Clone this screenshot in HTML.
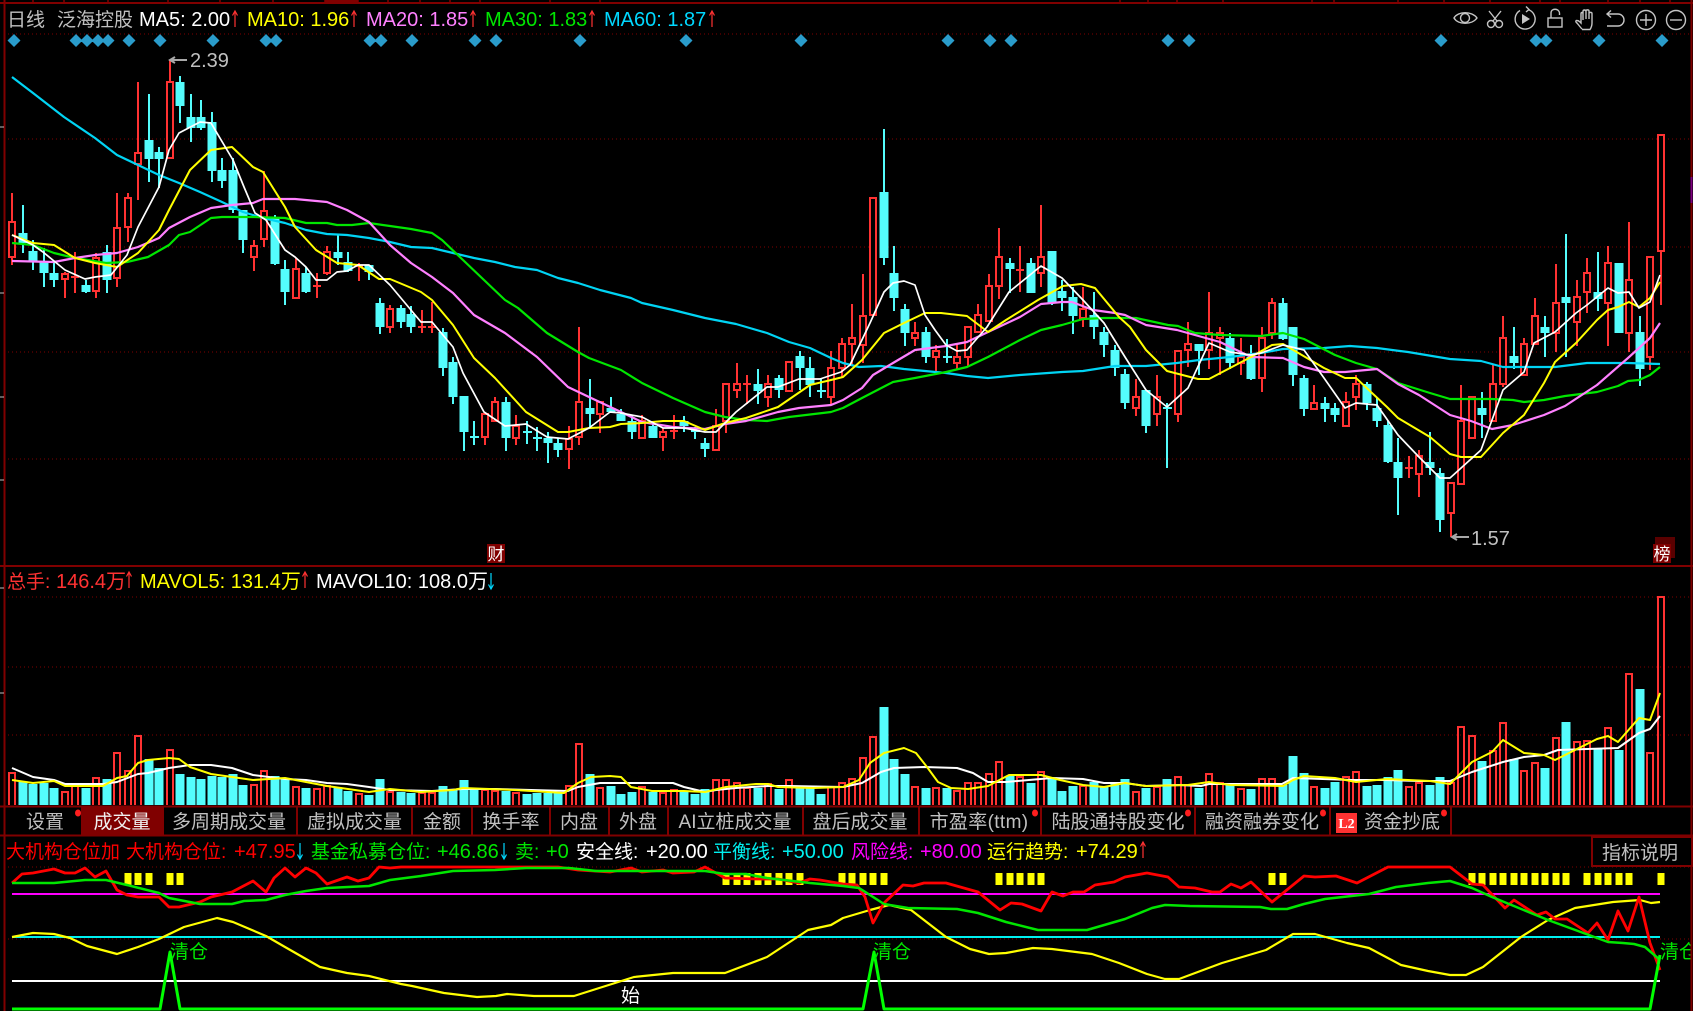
<!DOCTYPE html>
<html lang="zh"><head><meta charset="utf-8"><title>泛海控股 日线</title>
<style>
html,body{margin:0;padding:0;background:#000;width:1693px;height:1011px;overflow:hidden}
svg{display:block;position:absolute;left:0;top:0}
text{font-family:"Liberation Sans","Noto Sans CJK SC",sans-serif;white-space:pre}
.c{font-size:19px}.n{font-size:20px}.v{font-size:20px}
.tab{font-size:19px;fill:#c0c0c0;text-anchor:middle}
</style></head><body>
<svg width="1693" height="1011" viewBox="0 0 1693 1011" xmlns="http://www.w3.org/2000/svg">
<rect width="1693" height="1011" fill="#000"/>
<!-- dotted grid -->
<path d="M8 34H1690M8 139H1690M8 247H1690M8 352H1690M8 459H1690M8 597H1690M8 667H1690M8 735H1690M8 867H1690M8 939H1690" stroke="#800000" stroke-width="1" stroke-dasharray="1 3" fill="none"/>
<!-- frame -->
<path d="M0 3H1693M0 566H1693M0 806.5H1693M0 835.5H1693" stroke="#800000" stroke-width="2" fill="none"/>
<path d="M4.5 0V1011M1691.5 0V1011" stroke="#800000" stroke-width="2" fill="none"/>
<path d="M1691.5 177V203" stroke="#800080" stroke-width="2"/>
<path d="M33 0V2M64 0V2M108 0V2M168 0V2M220 0V2M273 0V2M325 0V2M358 0V2M388 0V2M420 0V2M450 0V2M480 0V2M550 0V2M600 0V2M1120 0V2M1148 0V2M1177 0V2M1223 0V2M1312 0V2M1334 0V2M1398 0V2M1444 0V2M1490 0V2M1540 0V2M1560 0V2M1608 0V2M1640 0V2M1670 0V2" stroke="#800000" stroke-width="1.5"/>
<path d="M325 0H358" stroke="#800000" stroke-width="4"/>
<path d="M0 127H4M0 293H4M0 397H4M0 480H4M0 588H4M0 693H4" stroke="#c0c0c0" stroke-width="1"/>

<!-- diamonds -->
<g fill="#2a9ccb">
<path d="M14 34l6.5 6.5-6.500 6.500-6.500-6.500zM76 34l6.500 6.500-6.500 6.500-6.500-6.500zM87 34l6.500 6.500-6.500 6.500-6.500-6.500zM98 34l6.500 6.500-6.500 6.500-6.500-6.500zM108 34l6.500 6.500-6.500 6.500-6.500-6.500zM129 34l6.500 6.500-6.500 6.500-6.500-6.500zM160 34l6.500 6.500-6.500 6.500-6.500-6.500zM213 34l6.500 6.500-6.500 6.500-6.500-6.500zM266 34l6.500 6.500-6.500 6.500-6.500-6.500zM276 34l6.500 6.500-6.500 6.500-6.500-6.500zM370 34l6.500 6.500-6.500 6.500-6.500-6.500zM381 34l6.500 6.500-6.500 6.500-6.500-6.500zM412 34l6.500 6.500-6.500 6.500-6.500-6.500zM475 34l6.500 6.500-6.500 6.500-6.500-6.500zM496 34l6.500 6.500-6.500 6.500-6.500-6.500zM580 34l6.500 6.500-6.500 6.500-6.500-6.500zM686 34l6.500 6.500-6.500 6.500-6.500-6.500zM801 34l6.500 6.500-6.500 6.500-6.500-6.500zM948 34l6.500 6.500-6.500 6.500-6.500-6.500zM990 34l6.500 6.500-6.500 6.500-6.500-6.500zM1011 34l6.500 6.500-6.500 6.500-6.500-6.500zM1168 34l6.500 6.500-6.500 6.500-6.500-6.500zM1189 34l6.500 6.500-6.500 6.500-6.500-6.500zM1441 34l6.500 6.500-6.500 6.500-6.500-6.500zM1536 34l6.500 6.500-6.500 6.500-6.500-6.500zM1546 34l6.500 6.500-6.500 6.500-6.500-6.500zM1599 34l6.500 6.500-6.500 6.500-6.500-6.500zM1662 34l6.500 6.500-6.500 6.500-6.500-6.500z"/>
</g>

<!-- red candles -->
<g shape-rendering="crispEdges">
<path stroke="#ff3232" stroke-width="2" fill="none" d="M12 193V265M65 272V298M75 252V293M96 253V298M117 193V287M128 193V242M138 82V200M170 60V159M254 240V271M264 171V247M296 258V298M317 273V298M327 246V275M359 263V281M390 305V333M422 310V333M432 302V333M485 414V445M495 397V421M516 415V445M569 426V469M579 327V445M600 402V433M642 415V438M663 428V451M674 415V439M716 409V451M726 384V433M737 363V398M747 375V404M768 375V407M789 362V391M831 351V405M842 338V378M852 304V365M863 274V363M873 198V315M915 322V346M936 345V375M957 345V369M968 327V367M978 304V333M989 274V322M999 228V299M1020 246V292M1041 205V287M1083 287V327M1136 379V416M1157 375V426M1178 351V422M1188 322V367M1209 292V369M1220 327V375M1241 338V375M1262 327V392M1272 298V339M1314 385V410M1346 392V427M1356 375V410M1409 456V478M1419 450V497M1451 483V537M1461 385V484M1472 397V438M1493 365V421M1503 316V387M1524 338V375M1535 298V344M1556 264V352M1577 280V346M1587 258V313M1608 246V346M1629 222V352M1650 257V370M1661 135V305M71 277H79M313 286H321M355 266H363M418 327H426M428 327H436M670 431H678M743 384H751M1016 270H1024M1405 468H1413"/>
<path stroke="#ff3232" stroke-width="2" fill="#000" d="M9 222H15V257H9ZM62 274H68V279H62ZM93 258H99V291H93ZM114 228H120V278H114ZM125 198H131V227H125ZM135 153H141V164H135ZM167 82H173V158H167ZM251 246H257V257H251ZM261 211H267V239H261ZM293 269H299V298H293ZM324 252H330V273H324ZM387 309H393V327H387ZM482 414H488V437H482ZM492 402H498V421H492ZM513 426H519V438H513ZM566 439H572V449H566ZM576 402H582V437H576ZM597 402H603V414H597ZM639 421H645V438H639ZM660 432H666V437H660ZM713 426H719V450H713ZM723 384H729V421H723ZM734 384H740V390H734ZM765 384H771V397H765ZM786 362H792V391H786ZM828 368H834V397H828ZM839 344H845V368H839ZM849 338H855V344H849ZM860 316H866V345H860ZM870 198H876V315H870ZM912 333H918V338H912ZM933 351H939V357H933ZM954 357H960V363H954ZM965 327H971V357H965ZM975 315H981V332H975ZM986 286H992V321H986ZM996 257H1002V286H996ZM1038 257H1044V273H1038ZM1080 309H1086V318H1080ZM1133 397H1139V408H1133ZM1154 397H1160V414H1154ZM1175 351H1181V414H1175ZM1185 344H1191V350H1185ZM1206 333H1212V350H1206ZM1217 333H1223V338H1217ZM1238 357H1244V363H1238ZM1259 338H1265V378H1259ZM1269 303H1275V333H1269ZM1311 403H1317V409H1311ZM1343 402H1349V426H1343ZM1353 384H1359V397H1353ZM1416 456H1422V474H1416ZM1448 483H1454V513H1448ZM1458 421H1464V484H1458ZM1469 397H1475V438H1469ZM1490 384H1496V421H1490ZM1500 338H1506V384H1500ZM1521 344H1527V375H1521ZM1532 316H1538V344H1532ZM1553 303H1559V333H1553ZM1574 297H1580V322H1574ZM1584 273H1590V292H1584ZM1605 263H1611V303H1605ZM1626 280H1632V333H1626ZM1647 257H1653V357H1647ZM1658 135H1664V251H1658Z"/>
<!-- cyan candles -->
<path stroke="#54fcfc" stroke-width="2" fill="none" d="M23 205V253M33 240V270M44 248V287M54 263V287M86 280V293M107 245V293M149 94V182M159 147V188M180 76V123M191 94V142M201 100V130M212 112V182M222 158V188M233 158V213M243 210V253M275 215V265M285 260V305M306 267V293M338 234V265M348 252V272M369 265V280M380 298V334M401 305V328M411 306V333M443 328V376M453 357V404M464 396V451M474 421V445M506 397V451M527 421V444M537 427V451M548 432V463M558 438V457M590 379V427M611 397V413M621 409V421M632 415V439M653 422V438M684 416V432M695 427V439M705 438V457M758 369V404M779 375V398M800 351V390M810 357V397M821 378V398M884 129V265M894 246V311M905 304V346M926 327V363M947 339V363M1010 258V293M1031 258V293M1052 251V305M1062 280V311M1073 287V334M1094 292V339M1104 327V357M1115 345V376M1125 369V409M1146 390V433M1167 403V468M1199 344V375M1230 333V369M1251 345V380M1283 298V340M1293 327V386M1304 375V416M1325 397V422M1335 403V422M1367 382V410M1377 397V427M1388 421V463M1398 438V515M1430 432V475M1440 468V532M1482 392V438M1514 327V369M1545 316V357M1566 234V357M1598 252V311M1619 263V333M1640 316V386M470 437H479M523 432H532M533 438H542M691 431H700M817 391H826M943 357H952M1163 408H1172"/>
<path stroke="#54fcfc" stroke-width="9" fill="none" d="M23 233V243M33 251V262M44 262V273M54 273V280M86 285V292M107 252V280M149 140V159M159 152V159M180 82V106M191 117V128M201 117V128M212 122V171M222 170V181M233 170V210M243 210V240M275 217V264M285 269V292M306 273V292M338 252V258M348 262V271M369 265V272M380 303V327M401 308V322M411 314V327M443 332V368M453 362V397M464 396V432M506 402V438M548 438V443M558 443V450M590 408V414M611 408V412M621 414V421M632 421V432M653 426V438M684 421V426M705 443V449M758 384V391M779 378V390M800 356V368M810 368V385M884 192V258M894 273V298M905 309V333M926 332V357M1010 263V269M1031 263V293M1052 251V303M1062 291V298M1073 297V316M1094 315V327M1104 332V345M1115 350V368M1125 374V403M1146 390V426M1199 344V351M1230 338V363M1251 357V379M1283 303V339M1293 327V375M1304 378V409M1325 403V409M1335 408V415M1367 384V403M1377 408V421M1388 425V462M1398 462V478M1430 462V468M1440 473V520M1482 408V415M1514 356V363M1545 327V333M1566 297V303M1598 292V299M1619 263V333M1640 332V369"/>
</g>

<!-- MA lines -->
<g fill="none" stroke-linejoin="round">
<polyline stroke="#00d4f4" stroke-width="2.2" points="12,77 33,93 64,117 95,138 117,155 138,165 159,175 179,183 200,192 222,202 243,212 263,218 285,223 306,230 327,234 347,235 369,238 390,242 411,247 432,248 453,253 474,258 495,262 515,267 537,270 558,278 578,283 600,290 631,298 642,303 673,310 705,318 736,324 767,333 789,342 810,348 831,358 843,363 859,367 881,366 904,369 946,373 967,376 988,378 1020,375 1062,372 1083,371 1115,366 1146,366 1177,363 1199,360 1230,357 1261,353 1283,349 1324,348 1350,346 1377,348 1408,352 1450,359 1481,361 1503,367 1555,367 1587,363 1628,363 1660,364"/>
<polyline stroke="#00e600" stroke-width="2.2" points="12,243 33,245 54,253 75,258 106,263 127,262 148,257 169,245 179,235 190,232 211,218 222,217 253,217 285,218 306,223 327,223 337,225 352,225 369,223 390,226 411,229 432,233 442,240 463,260 484,280 505,300 518,308 547,333 578,352 589,358 621,370 642,383 673,398 705,412 725,417 746,420 767,421 789,417 831,412 843,408 862,398 893,382 915,378 946,372 967,367 988,357 1020,340 1041,330 1062,325 1083,319 1104,318 1136,318 1168,325 1178,326 1195,333 1220,335 1261,336 1283,333 1304,339 1335,355 1356,363 1377,369 1398,383 1430,393 1450,399 1492,399 1513,400 1524,402 1544,400 1565,396 1597,392 1618,386 1628,381 1639,380 1650,375 1660,367"/>
<polyline stroke="#ff80ff" stroke-width="2.2" points="12,261 54,262 75,258 95,255 117,253 138,247 159,238 169,228 190,217 211,208 232,205 253,203 263,199 295,199 327,202 347,210 369,222 390,245 411,263 432,277 453,293 474,315 505,333 537,357 568,387 589,397 621,412 642,422 673,427 705,429 725,424 746,421 778,412 799,408 831,405 843,400 862,388 873,375 893,363 915,350 946,346 967,342 988,332 1020,317 1041,304 1062,302 1072,302 1093,310 1115,313 1125,315 1146,325 1177,330 1220,342 1251,357 1283,358 1304,367 1324,372 1345,372 1377,369 1398,384 1419,395 1450,415 1471,421 1492,429 1513,425 1544,415 1565,406 1597,385 1628,358 1650,338 1660,323"/>
<polyline stroke="#ffff00" stroke-width="2" points="12,235 33,243 54,245 75,258 95,263 117,267 138,253 159,230 169,210 190,170 211,150 232,147 253,167 263,172 285,207 295,227 316,250 337,263 358,265 379,279 390,279 421,292 432,300 453,325 474,358 495,378 526,412 558,432 568,432 589,428 610,427 621,424 642,423 663,421 684,421 705,430 725,423 746,418 778,407 810,385 831,380 843,377 862,360 884,333 904,323 925,313 941,313 967,316 988,332 1006,320 1038,300 1063,286 1081,284 1095,288 1119,317 1130,327 1146,350 1167,371 1198,379 1209,379 1251,357 1272,345 1283,344 1324,368 1345,378 1356,378 1387,407 1398,418 1430,437 1450,454 1461,457 1481,457 1503,433 1524,415 1544,383 1555,362 1576,343 1597,320 1608,310 1618,307 1629,302 1639,307 1650,298 1660,282"/>
<polyline stroke="#fff" stroke-width="1.7" points="12,235 33,245 43,252 65,270 85,279 95,277 111,275 127,255 138,227 159,187 169,150 179,133 200,122 211,123 233,160 244,187 255,213 266,220 285,250 295,257 306,267 316,280 327,280 337,272 347,271 358,265 369,265 390,285 421,322 432,322 453,347 463,373 484,412 505,426 526,424 547,437 568,439 589,428 610,412 621,413 642,417 663,428 684,428 705,432 716,432 736,412 767,387 778,387 799,379 820,379 841,372 850,365 870,323 884,292 893,283 904,281 915,285 925,315 935,330 946,345 957,351 967,350 987,327 1009,292 1041,266 1062,278 1083,300 1104,323 1125,357 1146,390 1167,407 1188,388 1209,343 1230,352 1251,355 1261,353 1283,345 1304,350 1324,378 1345,408 1356,403 1377,405 1398,435 1419,457 1440,478 1450,478 1481,450 1492,420 1503,390 1524,372 1534,343 1555,332 1576,313 1587,305 1608,288 1618,293 1629,292 1639,308 1650,302 1660,275"/>
</g>

<!-- price labels -->
<path d="M187 60H171M175 57L170 60L175 63M1469 537H1453M1457 534L1452 537L1457 540" stroke="#a8a8a8" stroke-width="2" fill="none"/>
<text x="190" y="67" class="n" fill="#c0c0c0">2.39</text>
<text x="1471" y="545" class="n" fill="#c0c0c0">1.57</text>

<!-- 财 / 榜 -->
<rect x="487" y="544" width="18" height="19" fill="#800000"/>
<text x="496" y="560" font-size="17" fill="#fff" text-anchor="middle">财</text>
<rect x="1655" y="537" width="20" height="21" fill="#5a0000"/>
<rect x="1653" y="544" width="18" height="19" fill="#800000"/>
<text x="1662" y="560" font-size="17" fill="#fff" text-anchor="middle">榜</text>

<!-- volume bars -->
<g shape-rendering="crispEdges" fill="none">
<path stroke="#54fcfc" stroke-width="9" d="M23 805V782M33 805V784M44 805V783M54 805V788M86 805V788M107 805V779M149 805V759M159 805V768M180 805V774M191 805V777M201 805V779M212 805V776M222 805V777M233 805V774M243 805V785M275 805V776M285 805V779M306 805V788M338 805V788M348 805V791M369 805V795M380 805V779M401 805V792M411 805V793M443 805V786M453 805V789M464 805V780M474 805V790M506 805V791M527 805V794M537 805V793M548 805V793M558 805V793M590 805V774M611 805V786M621 805V794M632 805V792M653 805V792M684 805V792M695 805V794M705 805V789M758 805V788M779 805V789M800 805V786M810 805V788M821 805V794M884 805V707M894 805V759M905 805V774M926 805V788M947 805V788M1010 805V776M1031 805V783M1052 805V778M1062 805V791M1073 805V786M1094 805V782M1104 805V786M1115 805V783M1125 805V779M1146 805V788M1167 805V779M1199 805V788M1230 805V785M1251 805V789M1283 805V785M1293 805V756M1304 805V773M1325 805V788M1335 805V782M1367 805V786M1377 805V785M1388 805V777M1398 805V770M1430 805V785M1440 805V777M1482 805V761M1514 805V759M1545 805V768M1566 805V722M1598 805V748M1619 805V750M1640 805V689"/>
<path stroke="#ff3232" stroke-width="2" d="M9 805V773H15V805M62 805V792H68V805M72 805V785H78V805M93 805V778H99V805M114 805V753H120V805M125 805V771H131V805M135 805V736H141V805M167 805V750H173V805M251 805V785H257V805M261 805V771H267V805M293 805V787H299V805M314 805V789H320V805M324 805V786H330V805M356 805V794H362V805M387 805V792H393V805M419 805V793H425V805M429 805V793H435V805M482 805V790H488V805M492 805V791H498V805M513 805V793H519V805M566 805V786H572V805M576 805V744H582V805M597 805V788H603V805M639 805V787H645V805M660 805V793H666V805M671 805V790H677V805M713 805V780H719V805M723 805V780H729V805M734 805V783H740V805M744 805V788H750V805M765 805V784H771V805M786 805V780H792V805M828 805V787H834V805M839 805V783H845V805M849 805V779H855V805M860 805V758H866V805M870 805V737H876V805M912 805V787H918V805M933 805V788H939V805M954 805V791H960V805M965 805V783H971V805M975 805V783H981V805M986 805V774H992V805M996 805V762H1002V805M1017 805V777H1023V805M1038 805V772H1044V805M1080 805V786H1086V805M1133 805V792H1139V805M1154 805V787H1160V805M1175 805V777H1181V805M1185 805V785H1191V805M1206 805V774H1212V805M1217 805V783H1223V805M1238 805V789H1244V805M1259 805V779H1265V805M1269 805V779H1275V805M1311 805V787H1317V805M1343 805V777H1349V805M1353 805V772H1359V805M1406 805V787H1412V805M1416 805V783H1422V805M1448 805V783H1454V805M1458 805V727H1464V805M1469 805V736H1475V805M1490 805V751H1496V805M1500 805V723H1506V805M1521 805V771H1527V805M1532 805V763H1538V805M1553 805V738H1559V805M1574 805V742H1580V805M1584 805V741H1590V805M1605 805V728H1611V805M1626 805V674H1632V805M1647 805V753H1653V805M1658 805V597H1664V805"/>
</g>
<g fill="none" stroke-linejoin="round">
<polyline stroke="#fff" stroke-width="2" points="12,768 33,777 54,780 65,784 103,784 117,782 138,774 148,773 169,768 190,765 211,765 232,768 253,775 285,779 306,780 327,783 347,784 369,787 390,790 432,791 463,789 495,789 568,791 578,787 600,783 673,783 684,787 705,792 716,790 736,788 768,786 789,786 843,787 862,783 881,772 894,768 924,767 957,768 973,773 988,782 1006,782 1052,778 1083,779 1104,783 1125,783 1146,786 1179,785 1201,786 1209,784 1282,784 1293,778 1352,780 1385,780 1419,781 1450,781 1472,772 1503,762 1524,757 1544,755 1558,750 1587,749 1618,748 1639,733 1650,729 1660,716"/>
<polyline stroke="#ffff00" stroke-width="2" points="12,780 33,783 54,781 65,786 103,786 117,778 127,776 138,763 148,760 169,758 179,759 190,767 211,774 232,777 253,780 285,778 327,786 369,792 390,789 421,792 453,790 463,788 515,790 564,793 578,783 591,777 610,776 621,777 631,787 652,791 684,791 705,792 726,787 756,784 768,784 778,787 813,788 843,787 859,780 870,763 884,753 904,748 916,753 927,767 938,782 951,788 968,789 988,786 1009,775 1041,775 1060,780 1083,785 1104,787 1125,783 1146,786 1188,785 1209,782 1230,785 1283,786 1293,780 1304,776 1335,778 1356,782 1387,779 1430,781 1450,784 1472,762 1492,752 1503,740 1524,753 1544,755 1555,760 1575,750 1597,739 1608,736 1618,742 1639,718 1650,720 1660,693"/>
</g>

<!-- tabs -->
<rect x="82" y="807.500" width="81" height="27" fill="#800000"/>
<path d="M163 807V835M297 807V835M412 807V835M472 807V835M550 807V835M609 807V835M668 807V835M803 807V835M919 807V835M1041 807V835M1195 807V835M1330 807V835M1451 807V835M82 807V835" stroke="#800000" stroke-width="2"/>
<g fill="#ff1e1e"><ellipse cx="78" cy="813" rx="3" ry="3.500"/><ellipse cx="1035" cy="813" rx="3" ry="3.500"/><ellipse cx="1188" cy="813" rx="3" ry="3.500"/><ellipse cx="1323" cy="813" rx="3" ry="3.500"/><ellipse cx="1444" cy="813" rx="3" ry="3.500"/></g>
<text class="tab" x="45" y="828">设置</text>
<text class="tab" x="122" y="828" style="fill:#f0f0f0">成交量</text>
<text class="tab" x="229" y="828">多周期成交量</text>
<text class="tab" x="354.500" y="828">虚拟成交量</text>
<text class="tab" x="442" y="828">金额</text>
<text class="tab" x="511" y="828">换手率</text>
<text class="tab" x="579" y="828">内盘</text>
<text class="tab" x="638" y="828">外盘</text>
<text class="tab" x="735" y="828">AI立桩成交量</text>
<text class="tab" x="860" y="828">盘后成交量</text>
<text class="tab" x="979" y="828" style="letter-spacing:.35px">市盈率(ttm)</text>
<text class="tab" x="1118" y="828">陆股通持股变化</text>
<text class="tab" x="1262" y="828">融资融券变化</text>
<rect x="1336" y="813" width="21" height="20" fill="#ff3232"/>
<text x="1346.500" y="828" fill="#fff" font-size="14" font-weight="bold" text-anchor="middle" style="font-family:'Liberation Serif',serif">L2</text>
<text class="tab" x="1402" y="828">资金抄底</text>

<!-- indicator panel -->
<path fill="none" stroke="#ffff00" stroke-width="7" shape-rendering="crispEdges" d="M128 873V885M138 873V885M149 873V885M170 873V885M180 873V885M726 873V885M737 873V885M747 873V885M758 873V885M768 873V885M779 873V885M789 873V885M800 873V885M842 873V885M852 873V885M863 873V885M873 873V885M884 873V885M999 873V885M1010 873V885M1020 873V885M1031 873V885M1041 873V885M1272 873V885M1283 873V885M1472 873V885M1482 873V885M1493 873V885M1503 873V885M1514 873V885M1524 873V885M1535 873V885M1545 873V885M1556 873V885M1566 873V885M1587 873V885M1598 873V885M1608 873V885M1619 873V885M1629 873V885M1661 873V885"/>
<path d="M12 894H1660" stroke="#ff00ff" stroke-width="2"/>
<path d="M12 937H1660" stroke="#00f0f0" stroke-width="2"/>
<path d="M12 981H1660" stroke="#fff" stroke-width="2"/>
<g fill="none" stroke-linejoin="round">
<polyline stroke="#ffff00" stroke-width="2.200" points="12,937 33,933 54,934 70,938 87,946 117,954 138,947 159,939 184,927 217,918 233,922 266,936 285,947 320,967 347,973 369,976 401,984 412,986 444,993 477,997 496,996 507,994 534,996 574,996 634,977 673,973 725,973 767,957 808,930 831,925 843,918 870,910 889,905 911,910 946,937 970,949 989,954 1006,953 1033,948 1052,949 1092,954 1119,963 1147,974 1165,979 1179,979 1222,963 1266,950 1293,934 1315,934 1347,943 1369,948 1401,965 1428,971 1450,975 1466,975 1483,967 1521,937 1548,920 1575,908 1613,902 1640,900 1651,903 1660,902"/>
<polyline stroke="#ff0000" stroke-width="2.800" points="12,883 22,874 33,873 54,869 65,873 75,873 85,868 95,877 106,871 117,890 127,895 138,897 159,897 169,907 179,907 200,902 211,897 232,892 253,881 266,892 274,878 285,868 295,877 306,868 316,873 327,884 347,877 358,881 369,878 379,867 390,868 401,867 558,867 578,870 610,872 631,868 642,872 663,870 673,873 694,872 705,867 716,873 725,878 757,879 778,879 799,883 810,879 820,880 843,884 857,885 865,897 873,923 884,903 903,885 913,886 924,883 946,883 978,892 1000,910 1011,903 1022,904 1041,911 1052,892 1063,896 1073,892 1084,892 1095,885 1114,882 1125,877 1147,873 1168,877 1179,887 1195,888 1212,892 1220,892 1231,884 1241,888 1251,882 1272,902 1304,876 1315,877 1336,876 1357,883 1388,867 1450,867 1472,884 1483,885 1505,908 1514,900 1537,915 1546,912 1555,919 1567,919 1588,933 1597,923 1608,940 1618,911 1628,931 1639,897 1650,943 1660,970"/>
<polyline stroke="#00e600" stroke-width="2.500" points="12,883 54,883 85,880 106,880 127,885 159,893 169,898 200,904 232,904 244,901 266,900 285,895 306,891 327,888 369,886 390,880 421,876 453,871 495,870 526,868 569,868 596,871 705,871 725,874 746,874 767,878 810,883 843,886 859,888 884,904 908,908 957,909 978,913 1006,922 1038,930 1087,930 1125,919 1152,908 1165,905 1190,906 1260,907 1271,909 1287,909 1304,904 1325,899 1369,894 1396,887 1428,883 1450,881 1472,888 1492,897 1548,920 1608,942 1623,943 1634,944 1645,947 1660,960"/>
<polyline stroke="#00ff00" stroke-width="3" points="12,1009 160,1009 170,952 180,1009 863,1009 874,952 884,1009 1650,1009 1660,955"/>
</g>
<text x="170" y="958" class="c" fill="#00e600">清仓</text>
<text x="873" y="958" class="c" fill="#00e600">清仓</text>
<text x="1660" y="958" class="c" fill="#00e600">清仓</text>
<text x="621" y="1002" class="c" fill="#fff">始</text>
<rect x="1691" y="940" width="2" height="24" fill="#000"/>
<path d="M1691.500 940V964" stroke="#800000" stroke-width="2"/>

<!-- header -->
<text x="7" y="26" class="c" fill="#c0c0c0">日线</text>
<text x="57" y="26" class="c" fill="#c0c0c0">泛海控股</text>
<text x="139" y="26" class="n" fill="#fff">MA5: 2.00</text>
<text x="247" y="26" class="n" fill="#ffff00">MA10: 1.96</text>
<text x="366" y="26" class="n" fill="#ff80ff">MA20: 1.85</text>
<text x="485" y="26" class="n" fill="#00e600">MA30: 1.83</text>
<text x="604" y="26" class="n" fill="#00d8ff">MA60: 1.87</text>
<path d="M235 27V12M232.500 15.500L235 11L237.500 15.500M354 27V12M351.500 15.500L354 11L356.500 15.500M473 27V12M470.500 15.500L473 11L475.500 15.500M592 27V12M589.500 15.500L592 11L594.500 15.500M712 27V12M709.500 15.500L712 11L714.500 15.500" stroke="#ff3232" stroke-width="1.200" fill="none"/>

<!-- toolbar icons -->
<g fill="none" stroke="#c4c4c4" stroke-width="1.400">
<path d="M1454 18C1458 11 1472 11 1477 18C1472 25 1458 25 1454 18Z"/><circle cx="1465" cy="18" r="4.500"/>
<path d="M1489 11L1497 21M1501 11L1493 21"/><circle cx="1491" cy="24" r="3.500"/><circle cx="1499" cy="24" r="3.500"/>
<path d="M1528 9.500A10 10 0 1 1 1520 10.500"/><path d="M1526 6.500L1529 9.500L1526 12"/><path d="M1522 14L1530 19L1522 24Z" fill="#c4c4c4" stroke="none"/>
<rect x="1548" y="18" width="14" height="9"/><path d="M1551 18V13C1551 8 1559 8 1559.500 13V15"/>
<path d="M1582 29C1580 27 1578 24 1576 22C1575 20 1578 20 1580 22L1581 23V14C1581 12 1583 12 1583 14V20M1583 19V11.500C1583 9.500 1586 9.500 1586 11.500V19M1586 19V11C1586 9.500 1589 9.500 1589 11V19M1589 19V13.500C1589 12 1592 12 1592 13.500V23C1592 26 1591 28 1590 29.500H1582"/>
<path d="M1607 14H1618A6 6 0 0 1 1618 26H1607M1611 10.500L1607 14L1611 17.500"/>
<circle cx="1646" cy="20" r="9.500"/><path d="M1646 14V26M1640 20H1652"/>
<circle cx="1676" cy="20" r="9.500"/><path d="M1670 20H1682"/>
</g>

<!-- volume legend -->
<text x="7" y="588" class="c" fill="#ff3232">总手:</text>
<text x="56" y="588" class="v" fill="#ff3232">146.4万</text>
<text x="140" y="588" class="v" fill="#ffff00">MAVOL5: 131.4万</text>
<text x="316" y="588" class="v" fill="#fff">MAVOL10: 108.0万</text>
<path d="M129 588V573M126.500 576.500L129 572L131.500 576.500M305 588V573M302.500 576.500L305 572L307.500 576.500" stroke="#ff3232" stroke-width="1.200" fill="none"/>
<path d="M491 573V588M488.500 584.500L491 589L493.500 584.500" stroke="#00d8ff" stroke-width="1.200" fill="none"/>

<!-- indicator legend -->
<text x="6" y="858" class="c" fill="#ff0000">大机构仓位加</text>
<text x="126" y="858" class="c" fill="#ff0000">大机构仓位:</text>
<text x="234" y="858" class="n" fill="#ff0000">+47.95</text>
<path d="M300 843V858M297.500 854.500L300 859L302.500 854.500M504 843V858M501.500 854.500L504 859L506.500 854.500" stroke="#00d8ff" stroke-width="1.200" fill="none"/>
<text x="311" y="858" class="c" fill="#00e600">基金私募仓位:</text>
<text x="437" y="858" class="n" fill="#00e600">+46.86</text>
<text x="515" y="858" class="c" fill="#00e600">卖:</text>
<text x="546" y="858" class="n" fill="#00e600">+0</text>
<text x="576" y="858" class="c" fill="#fff">安全线:</text>
<text x="646" y="858" class="n" fill="#fff">+20.00</text>
<text x="713" y="858" class="c" fill="#00f0f0">平衡线:</text>
<text x="782" y="858" class="n" fill="#00f0f0">+50.00</text>
<text x="851" y="858" class="c" fill="#ff00ff">风险线:</text>
<text x="920" y="858" class="n" fill="#ff00ff">+80.00</text>
<text x="987" y="858" class="c" fill="#ffff00">运行趋势:</text>
<text x="1076" y="858" class="n" fill="#ffff00">+74.29</text>
<path d="M1143 858V843M1140.500 846.500L1143 842L1145.500 846.500" stroke="#ff3232" stroke-width="1.200" fill="none"/>
<rect x="1592" y="837" width="100" height="29" fill="#000" stroke="#800000" stroke-width="2"/>
<text x="1640" y="859" class="c" fill="#c0c0c0" text-anchor="middle">指标说明</text>
</svg>
</body></html>
